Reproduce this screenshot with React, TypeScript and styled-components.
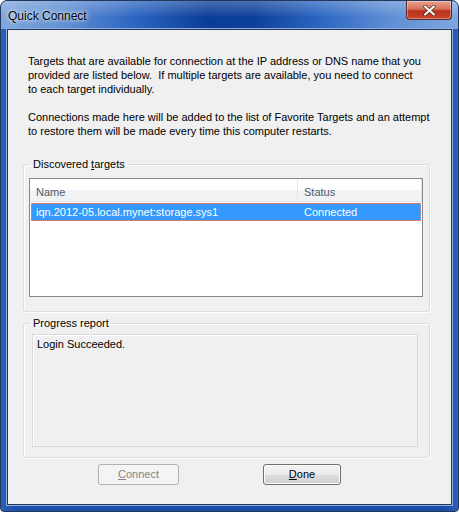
import React from 'react';
import styled, { createGlobalStyle } from 'styled-components';

const GlobalStyle = createGlobalStyle`
  html, body {
    margin: 0;
    padding: 0;
    background: #ffffff;
  }
  body {
    font-family: "Liberation Sans", Arial, sans-serif;
    font-size: 11px;
    color: #000;
  }
`;

const Window = styled.div`
  width: 459px;
  height: 512px;
  box-sizing: border-box;
  display: flex;
  flex-direction: column;
  border: 1px solid #23375a;
  border-radius: 7px 7px 4px 4px;
  background: linear-gradient(90deg, #2b5fb8 0%, #1c4fa8 3%, #1a4ca6 97%, #2b5fb8 100%);
  overflow: hidden;
`;

const TitleBar = styled.div`
  height: 28px;
  display: flex;
  align-items: flex-start;
  justify-content: space-between;
  padding-left: 7px;
  flex-shrink: 0;
  background:
    linear-gradient(180deg, rgba(255, 255, 255, 0.25) 0%, rgba(255, 255, 255, 0) 60%),
    linear-gradient(90deg, #7fa6dc 0%, #5f8fd2 14%, #2a63c0 30%, #0a3d98 45%, #0c3f9a 55%, #2c66c2 70%, #5e8ed4 85%, #7fa7de 100%);
`;

const Title = styled.div`
  font-family: "Liberation Sans", Arial, sans-serif;
  font-size: 12px;
  line-height: 14px;
  margin-top: 8px;
  color: #000;
  text-shadow: 0 0 6px rgba(255, 255, 255, 0.9), 0 0 3px rgba(255, 255, 255, 0.9);
`;

const CloseButton = styled.div`
  width: 46px;
  height: 19px;
  margin-right: 6px;
  box-sizing: border-box;
  border: 1px solid #5a2a28;
  border-top: none;
  border-radius: 0 0 4px 4px;
  background: linear-gradient(180deg, #e8a393 0%, #d4705a 45%, #b8321c 55%, #c8462c 100%);
  display: flex;
  align-items: center;
  justify-content: center;
  box-shadow: inset 0 0 0 1px rgba(255, 255, 255, 0.35);
`;

const Client = styled.div`
  flex: 1;
  margin: 0 6px 6px 6px;
  background: #f0f0f0;
  border: 1px solid #1f3560;
  box-shadow: 0 0 0 1px #8fb0dc;
  display: flex;
  flex-direction: column;
  padding: 2px 21px 0 15px;
`;

const Paragraph = styled.p<{ $top: number }>`
  margin: ${(p) => p.$top}px 0 0 5px;
  line-height: 14px;
  white-space: nowrap;
`;

const Group = styled.fieldset<{ $height: number; $top: number }>`
  margin: ${(p) => p.$top}px 0 0 0;
  padding: 0 6px 0 5px;
  height: ${(p) => p.$height}px;
  box-sizing: border-box;
  border: 1px solid #d5dfe5;
  border-radius: 3px;
  box-shadow: inset 1px 1px 0 #fff, 1px 1px 0 #fff;
  min-width: 0;
`;

const Legend = styled.legend`
  padding: 0 2px;
  margin-left: 2px;
  line-height: 13px;
`;

const ListView = styled.div`
  margin-top: 7px;
  height: 119px;
  border: 1px solid #828790;
  background: #fff;
  box-sizing: border-box;
`;

const HeaderRow = styled.div`
  display: grid;
  grid-template-columns: 268px 1fr;
  height: 22px;
  background: linear-gradient(180deg, #ffffff 0%, #ffffff 50%, #f3f4f6 51%, #f1f2f4 100%);
  border-bottom: 1px solid #e5e5e5;
`;

const HeaderCell = styled.div<{ $last?: boolean }>`
  padding: 3px 0 0 6px;
  line-height: 20px;
  color: #4c5a6e;
  border-right: 1px solid ${(p) => (p.$last ? '#e5e5e5' : '#e3e8ee')};
`;

const Row = styled.div<{ $selected?: boolean }>`
  display: grid;
  grid-template-columns: 268px 1fr;
  height: 18px;
  margin: 1px 1px 0 1px;
  background: ${(p) => (p.$selected ? '#3399ff' : 'transparent')};
  color: ${(p) => (p.$selected ? '#fff' : '#000')};
  outline: 1px dotted #e8887a;
  outline-offset: -1px;
`;

const Cell = styled.div`
  padding-left: 5px;
  line-height: 18px;
  white-space: nowrap;
`;

const ReportBox = styled.div`
  margin: 4px 5px 0 3px;
  height: 113px;
  border: 1px solid #dadada;
  box-shadow: inset 1px 1px 0 #fff;
  background: #f0f0f0;
  padding: 3px 4px;
  box-sizing: border-box;
`;

const ButtonRow = styled.div`
  display: flex;
  margin-top: 6px;
  padding-left: 75px;
  gap: 84px;
`;

const Button = styled.div<{ $disabled?: boolean; $width: number }>`
  width: ${(p) => p.$width}px;
  height: 21px;
  box-sizing: border-box;
  border: 1px solid ${(p) => (p.$disabled ? '#adb2b5' : '#707070')};
  border-radius: 3px;
  background: ${(p) =>
    p.$disabled
      ? '#f4f4f4'
      : 'linear-gradient(180deg, #f2f2f2 0%, #ebebeb 50%, #dddddd 51%, #cfcfcf 100%)'};
  box-shadow: inset 0 0 0 1px ${(p) => (p.$disabled ? '#f4f4f4' : '#fcfcfc')};
  color: ${(p) => (p.$disabled ? '#838383' : '#000')};
  text-align: center;
  line-height: 19px;
`;

const Mnemonic = styled.span`
  text-decoration: underline;
`;

export default function App() {
  return (
    <>
      <GlobalStyle />
      <Window>
        <TitleBar>
          <Title>Quick Connect</Title>
          <CloseButton>
            <svg width="13" height="11" viewBox="0 0 13 11">
              <path d="M2 1.5 L11 9.5 M11 1.5 L2 9.5" stroke="#5b2a20" strokeWidth="3.4" strokeLinecap="round" />
              <path d="M2 1.5 L11 9.5 M11 1.5 L2 9.5" stroke="#ffffff" strokeWidth="2" strokeLinecap="round" />
            </svg>
          </CloseButton>
        </TitleBar>
        <Client>
          <Paragraph $top={22}>
            Targets that are available for connection at the IP address or DNS name that you
            <br />
            provided are listed below.&nbsp; If multiple targets are available, you need to connect
            <br />
            to each target individually.
          </Paragraph>
          <Paragraph $top={14}>
            Connections made here will be added to the list of Favorite Targets and an attempt
            <br />
            to restore them will be made every time this computer restarts.
          </Paragraph>
          <Group $height={154} $top={20}>
            <Legend>
              Discovered <Mnemonic>t</Mnemonic>argets
            </Legend>
            <ListView>
              <HeaderRow>
                <HeaderCell>Name</HeaderCell>
                <HeaderCell $last>Status</HeaderCell>
              </HeaderRow>
              <Row $selected>
                <Cell>iqn.2012-05.local.mynet:storage.sys1</Cell>
                <Cell>Connected</Cell>
              </Row>
            </ListView>
          </Group>
          <Group $height={141} $top={5}>
            <Legend>Progress report</Legend>
            <ReportBox>Login Succeeded.</ReportBox>
          </Group>
          <ButtonRow>
            <Button $disabled $width={81}>
              <Mnemonic>C</Mnemonic>onnect
            </Button>
            <Button $width={78}>
              <Mnemonic>D</Mnemonic>one
            </Button>
          </ButtonRow>
        </Client>
      </Window>
    </>
  );
}
